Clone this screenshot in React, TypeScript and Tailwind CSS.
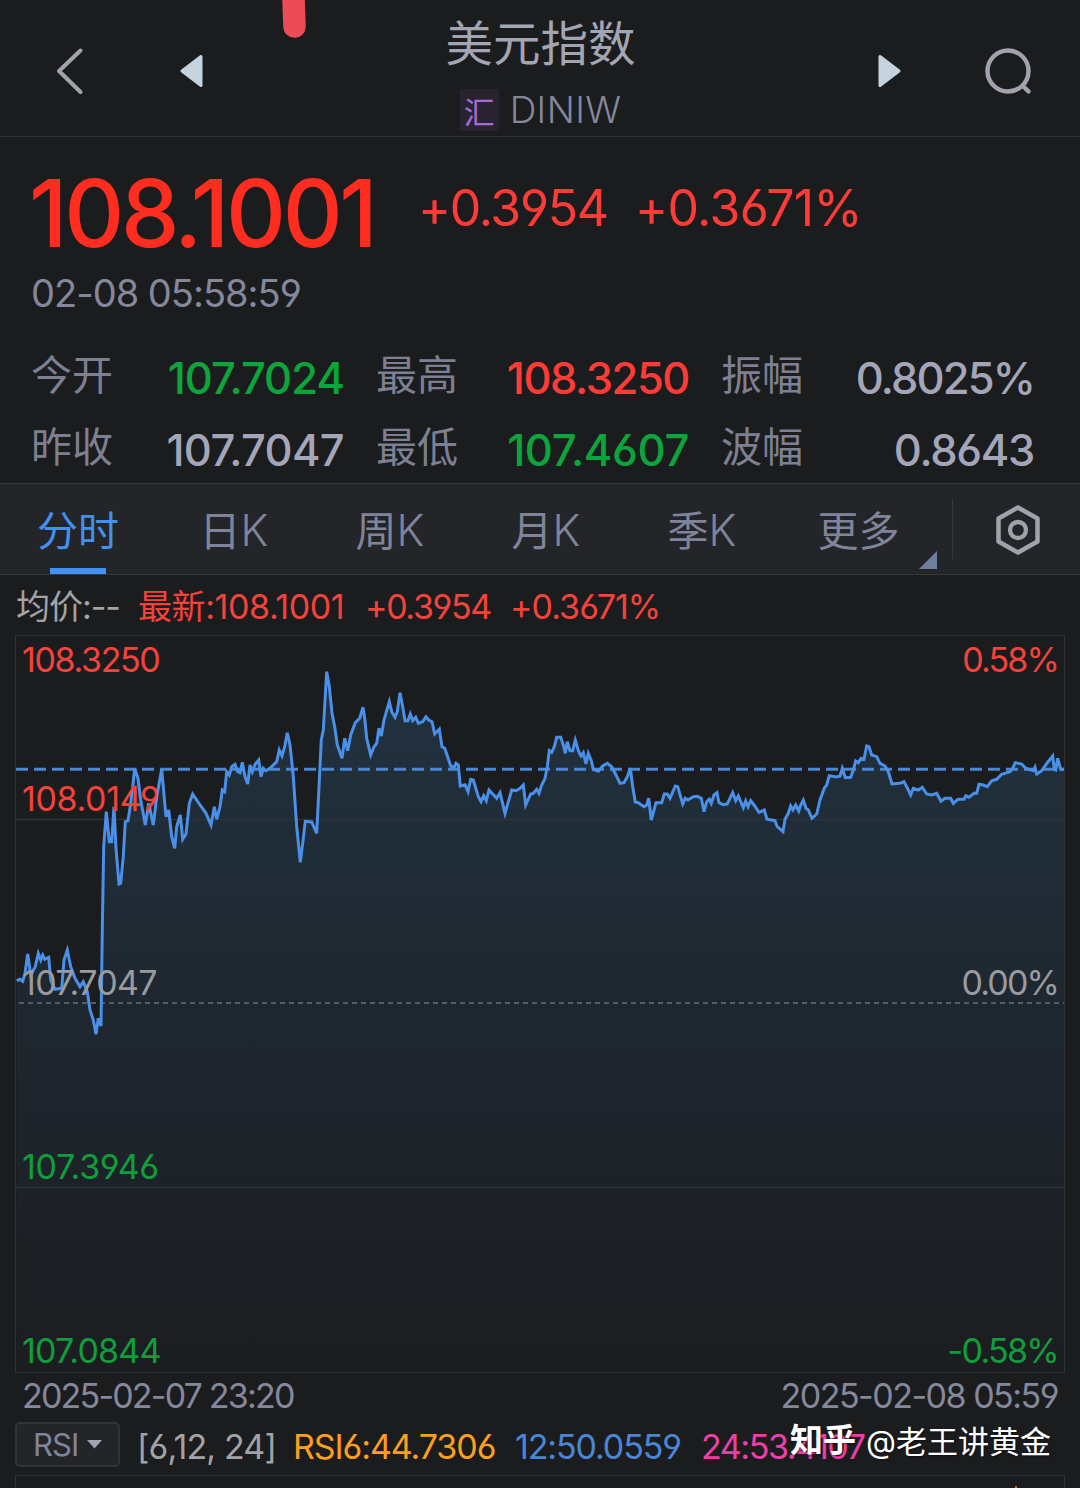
const FONT = "font-['Inter','Noto_Sans_CJK_SC',sans-serif]";

type Segment = { left: number; pts: number[] };

// x, y pairs in thirds of a pixel, x relative to the left edge of each segment
const SEGMENTS: Segment[] = [
  {
    left: 0,
    pts: [
      50, 1052, 60, 1048, 68, 1054, 75, 1030, 83, 972, 92, 1035, 106, 1010, 115, 970, 122, 990, 128, 975, 134, 988,
      146, 982, 152, 1050, 165, 1078, 185, 1075, 192, 990, 202, 960, 212, 1010, 225, 1045, 240, 1070, 250, 1055,
      262, 1085, 270, 1140, 280, 1170, 288, 1213, 295, 1165, 303, 1188, 307, 900, 311, 650, 319, 545, 328, 635,
      335, 635, 342, 530, 348, 655, 357, 762, 362, 760, 370, 680, 376, 575, 384, 572, 392, 520, 398, 470, 404, 415,
      414, 445, 422, 510, 436, 585, 446, 520, 460, 585, 470, 500, 485, 418, 498, 560, 506, 540, 515, 620, 524, 655,
      530, 590, 541, 555, 548, 628, 558, 612, 568, 520, 578, 492, 600, 525, 618, 550, 633, 585, 643, 530, 650, 568,
      660, 530, 667, 480, 674, 485, 680, 425, 688, 435, 695, 410, 705, 403, 713, 425, 720, 428, 727, 397, 735, 440,
      743, 462, 750, 405, 757, 425, 766, 402, 776, 390, 783, 440, 790, 415, 797, 422,
    ],
  },
  {
    left: 250,
    pts: [
      60, 415, 80, 395, 88, 360, 96, 378, 104, 350, 112, 308, 120, 345, 130, 440, 140, 590, 151, 697, 158, 640,
      166, 574, 185, 576, 200, 610, 206, 490, 214, 330, 220, 300, 230, 125, 238, 170, 246, 250, 254, 290, 262, 345,
      276, 385, 284, 325, 293, 362, 302, 315, 316, 278, 329, 265, 339, 232, 344, 265, 350, 325, 362, 375, 372, 350,
      380, 340, 387, 295, 394, 318, 402, 270, 418, 215, 425, 245, 435, 262, 442, 245, 450, 188, 458, 230, 465, 272,
      474, 272, 481, 252, 488, 272, 497, 262, 505, 280, 518, 275, 528, 260, 536, 270, 546, 275, 554, 312, 568, 298,
      576, 350, 584, 355, 602, 408, 612, 412, 618, 400, 625, 405, 631, 468, 645, 464, 654, 485, 662, 448, 670, 450,
      685, 500, 693, 515, 701, 497, 709, 512, 717, 480, 740, 505, 750, 488, 765, 550, 785, 480, 798, 482,
    ],
  },
  {
    left: 510,
    pts: [
      30, 475, 40, 465, 47, 525, 62, 492, 70, 490, 80, 478, 87, 490, 95, 465, 105, 445, 112, 410, 118, 362, 125, 367,
      133, 350, 140, 322, 152, 322, 160, 345, 166, 370, 172, 335, 180, 362, 188, 362, 196, 330, 206, 365, 213, 378,
      220, 368, 228, 402, 235, 370, 244, 392, 250, 418, 265, 424, 278, 408, 292, 400, 305, 410, 318, 435, 330, 460,
      342, 458, 352, 440, 361, 415, 368, 470, 376, 516, 385, 518, 402, 530, 410, 525, 416, 505, 424, 570, 438, 518,
      455, 518, 463, 492, 472, 492, 480, 505, 496, 468, 503, 470, 518, 522, 526, 505, 534, 510, 550, 500, 562, 499,
      574, 505, 582, 545, 590, 515, 598, 508, 604, 520, 612, 495, 621, 488, 627, 518, 640, 524, 652, 522, 668, 488,
      677, 512, 685, 498, 700, 533, 707, 513, 714, 530, 722, 512, 732, 525, 747, 547, 763, 540, 771, 568, 795, 572,
      802, 590, 819, 605, 825, 568, 835, 550, 842, 528, 849, 540, 857, 525,
    ],
  },
  {
    left: 790,
    pts: [
      26, 543, 32, 525, 40, 510, 48, 535, 55, 540, 66, 565, 80, 552, 90, 510, 103, 475, 110, 465, 118, 437, 140, 441,
      150, 438, 157, 415, 166, 443, 182, 442, 190, 420, 197, 393, 205, 398, 213, 385, 222, 388, 230, 348, 237, 350,
      245, 375, 260, 380, 270, 400, 285, 408, 295, 425, 306, 462, 330, 460, 342, 455, 350, 470, 362, 495, 370, 475,
      385, 480, 397, 472, 410, 492, 425, 495, 440, 490, 453, 514, 465, 505, 482, 505, 490, 520, 504, 508, 522, 508,
      528, 497, 537, 502, 552, 490, 560, 490, 567, 463, 580, 465, 592, 470, 605, 452, 620, 448, 635, 433, 660, 425,
      668, 415, 676, 398, 695, 402, 707, 415, 730, 422, 735, 412, 740, 432, 755, 422, 772, 398, 788, 378, 793, 418,
      797, 420, 803, 385, 812, 418, 822, 418,
    ],
  },
];

const linePoints = SEGMENTS.flatMap(({ left, pts }) => {
  const out: string[] = [];
  for (let i = 0; i < pts.length; i += 2) {
    out.push(`${(left + pts[i] / 3 - 15).toFixed(1)},${(pts[i + 1] / 3 - 5).toFixed(1)}`);
  }
  return out;
});

const STATS = [
  { label: "今开", value: "107.7024", color: "text-[#0aa63c]", tracking: "tracking-[-0.022em]" },
  { label: "最高", value: "108.3250", color: "text-[#ff3b37]", tracking: "tracking-[-0.033em]" },
  { label: "振幅", value: "0.8025%", color: "text-[#a3a6b8]", tracking: "tracking-[-0.043em]" },
  { label: "昨收", value: "107.7047", color: "text-[#a3a6b8]", tracking: "tracking-[-0.015em]" },
  { label: "最低", value: "107.4607", color: "text-[#0aa63c]", tracking: "tracking-[-0.007em]" },
  { label: "波幅", value: "0.8643", color: "text-[#a3a6b8]", tracking: "tracking-[-0.03em]" },
];

const TABS = ["日", "周", "月", "季"];

function Header() {
  return (
    <header className="relative flex h-[137px] shrink-0 border-b border-[#313235] pr-[49px] pl-[56px]">
      <svg className="absolute top-0 left-[276px]" width="36" height="42" viewBox="0 0 36 42">
        <path d="M17 -14L18.5 26.500" stroke="#ee4b59" strokeWidth="22.5" strokeLinecap="round" />
      </svg>
      <svg className="mt-[47px] shrink-0" width="28" height="48" viewBox="0 0 28 48" fill="none">
        <path d="M24.500 3.500L3 24L24.500 45" stroke="#a2a2ac" strokeWidth="4" strokeLinecap="round" strokeLinejoin="round" />
      </svg>
      <svg className="mt-[54px] ml-[96px] shrink-0" width="23" height="34" viewBox="0 0 23 34">
        <path d="M21 2.500V31.500L2 17Z" fill="#c3d3df" stroke="#c3d3df" strokeWidth="3" strokeLinejoin="round" />
      </svg>
      <div className="flex flex-1 flex-col items-center pt-[20px]">
        <h1 className="text-[47.500px] leading-none text-[#a3a5b3]">美元指数</h1>
        <div className="mt-[21px] flex h-[42px] gap-[11px]">
          <span className="flex w-[39px] justify-center bg-[#29222f] pt-[8px] text-[31px] leading-none text-[#a76bd4]">
            汇
          </span>
          <span className="pt-[2px] text-[37px] leading-none font-light tracking-[0.01em] text-[#85889a]">DINIW</span>
        </div>
      </div>
      <svg className="mt-[54px] shrink-0" width="23" height="34" viewBox="0 0 23 34">
        <path d="M2 2.500V31.500L21 17Z" fill="#c3d3df" stroke="#c3d3df" strokeWidth="3" strokeLinejoin="round" />
      </svg>
      <svg className="mt-[47px] ml-[84px] shrink-0" width="46" height="48" viewBox="0 0 46 48" fill="none">
        <circle cx="23" cy="24" r="20.500" stroke="#a2a2ac" strokeWidth="4.400" />
        <path d="M38.500 39.500L43.500 44.500" stroke="#a2a2ac" strokeWidth="4.400" strokeLinecap="round" />
      </svg>
    </header>
  );
}

function Quote() {
  return (
    <section className="h-[346px] shrink-0 pt-[30px]">
      <div className="flex h-[107px] text-[#ff3b37]">
        <span className="w-[388px] pl-[29px] text-[93px] leading-none font-medium tracking-[-0.036em] text-[#ff2d20]">
          108.1001
        </span>
        <span className="w-[216px] pt-[16px] pl-[30px] text-[50px] leading-none tracking-[-0.027em]">+0.3954</span>
        <span className="pt-[16px] pl-[31px] text-[50px] leading-none tracking-[-0.013em]">+0.3671%</span>
      </div>
      <p className="pl-[31px] text-[38px] leading-none tracking-[-0.026em] text-[#85889a]">02-08 05:58:59</p>
      <div className="mt-[43px] grid grid-cols-[313px_313px_313px] gap-x-[32px] pl-[31px]">
        {STATS.map((s) => (
          <div key={s.label} className="flex h-[72px] justify-between">
            <span className="text-[41px] leading-none text-[#7d8092]">{s.label}</span>
            <span className={`pt-[2px] text-[43.500px] leading-none font-medium ${s.tracking} ${s.color}`}>{s.value}</span>
          </div>
        ))}
      </div>
    </section>
  );
}

function Tabs() {
  return (
    <nav className="flex h-[92px] shrink-0 border-y border-[#35373b] bg-[#232529] text-[41px] leading-none text-[#80849a]">
      <div className="flex w-[156px] flex-col items-center justify-between pt-[27px] text-[#4490ee]">
        <span>分时</span>
        <span className="h-[6px] w-[56px] bg-[#4490ee]" />
      </div>
      {TABS.map((t) => (
        <div key={t} className="w-[156px] pt-[25px] text-center">
          {t}
          <span className="text-[43px] leading-none font-light">K</span>
        </div>
      ))}
      <div className="relative w-[157px] pt-[27px] text-center">
        更多
        <svg className="absolute right-0 bottom-[5px]" width="18" height="18" viewBox="0 0 18 18">
          <path d="M18 0V18H0Z" fill="#6f7f9e" />
        </svg>
      </div>
      <div className="mt-[15px] ml-[15px] h-[60px] w-px bg-[#35373b]" />
      <svg className="mt-[20px] ml-[41px]" width="48" height="52" viewBox="0 0 48 52" fill="none" stroke="#a2a2ac">
        <path d="M24 3.500L43.500 14.500V37.500L24 48.500L4.500 37.500V14.500Z" strokeWidth="4.500" strokeLinejoin="round" />
        <circle cx="24" cy="26" r="8" strokeWidth="4.300" />
      </svg>
    </nav>
  );
}

function Chart() {
  return (
    <div className="relative mx-[15px] h-[738px] shrink-0 border border-[#303134] text-[34px] leading-none">
      <svg className="absolute -top-px -left-px" width="1050" height="738" viewBox="0 0 1050 738" fill="none">
        <defs>
          <linearGradient id="area" x1="0" y1="36" x2="0" y2="738" gradientUnits="userSpaceOnUse">
            <stop offset="0" stopColor="#3a8bc4" stopOpacity="0.2" />
            <stop offset="1" stopColor="#3a7bc4" stopOpacity="0.01" />
          </linearGradient>
        </defs>
        <polygon points={`2,738 ${linePoints.join(" ")} 1049,738`} fill="url(#area)" />
        <path d="M1 184.500H1049M1 552.500H1049" stroke="#2b3338" strokeWidth="1.500" />
        <path d="M4 368H1049" stroke="#66707a" strokeWidth="1.300" strokeDasharray="5 4" />
        <path d="M1 134.300H1049" stroke="#4a86d2" strokeWidth="3" strokeDasharray="12 6" />
        <polyline points={linePoints.join(" ")} stroke="#4a90e8" strokeWidth="3" />
      </svg>
      <div className="absolute inset-0 px-[6px]">
        <div className="flex h-[139px] justify-between pt-[7px] text-[#f4433c]">
          <span className="tracking-[-0.04em]">108.3250</span>
          <span className="tracking-[-0.055em]">0.58%</span>
        </div>
        <div className="h-[184px] pt-[7px] tracking-[-0.01em] text-[#f4433c]">108.0149</div>
        <div className="flex h-[184px] justify-between pt-[7px] text-[#999b9e]">
          <span className="tracking-[-0.02em]">107.7047</span>
          <span className="tracking-[-0.055em]">0.00%</span>
        </div>
        <div className="h-[184px] pt-[7px] tracking-[-0.01em] text-[#0e9f3c]">107.3946</div>
      </div>
      <div className="absolute inset-x-[6px] bottom-[4px] flex justify-between text-[#0e9f3c]">
        <span className="tracking-[-0.023em]">107.0844</span>
        <span className="tracking-[-0.05em]">-0.58%</span>
      </div>
    </div>
  );
}

function Watermark() {
  return (
    <div className="absolute right-[29px] bottom-[31px] flex items-end text-[31px] leading-none whitespace-nowrap text-white [text-shadow:1px_1px_2px_rgba(0,0,0,0.5)]">
      <span className="mr-[10px] text-[33px] font-bold">知乎</span>
      <span>@老王讲黄金</span>
    </div>
  );
}

export default function App() {
  return (
    <main
      className={`relative flex h-[1488px] w-[1080px] flex-col overflow-hidden bg-[#1b1c1e] [font-feature-settings:'cv03','cv04'] ${FONT}`}
    >
      <Header />
      <Quote />
      <Tabs />

      {/* Average / latest price */}
      <div className="flex h-[60px] shrink-0 pt-[15px] pl-[16px] text-[34px] leading-none text-[#f4433c]">
        <span className="w-[122px] tracking-[-0.03em] text-[#a2a3a6]">均价:--</span>
        <span className="w-[227px] tracking-[-0.012em]">最新:108.1001</span>
        <span className="w-[145px] tracking-[-0.04em]">+0.3954</span>
        <span className="tracking-[-0.028em]">+0.3671%</span>
      </div>

      <Chart />

      <div className="flex h-[49px] shrink-0 justify-between px-[22px] pt-[6px] text-[34px] leading-none text-[#85889a]">
        <span className="tracking-[-0.053em]">2025-02-07 23:20</span>
        <span className="tracking-[-0.044em]">2025-02-08 05:59</span>
      </div>

      {/* Indicator row */}
      <div className="flex h-[53px] shrink-0 pl-[15px] text-[34px] leading-none whitespace-nowrap">
        <div className="flex h-[45px] w-[105px] items-center rounded-[5px] border-2 border-[#313339] bg-[#232529] pl-[16px] text-[31px] text-[#80849a]">
          <span className="tracking-[-0.03em]">RSI</span>
          <svg className="ml-[9px]" width="15" height="9" viewBox="0 0 15 9">
            <path d="M0 0H15L7.500 8.500Z" fill="#a0a3b4" />
          </svg>
        </div>
        <span className="w-[155px] pt-[8px] pl-[17px] tracking-[-0.025em] text-[#a2a3a6]">[6,12, 24]</span>
        <span className="w-[222px] pt-[8px] pl-[18px] tracking-[-0.032em] text-[#fb9f1c]">RSI6:44.7306</span>
        <span className="w-[186px] pt-[8px] pl-[18px] tracking-[-0.033em] text-[#4a86d8]">12:50.0559</span>
        <span className="pt-[8px] pl-[18px] tracking-[-0.042em] text-[#ee3fa8]">24:53.4107</span>
      </div>

      <div className="mx-[15px] flex h-[30px] shrink-0 justify-end border border-[#303134] pt-[10px] pr-[47px]">
        <span className="h-[3px] w-[2px] bg-[#b9741c]" />
      </div>

      <Watermark />
    </main>
  );
}
